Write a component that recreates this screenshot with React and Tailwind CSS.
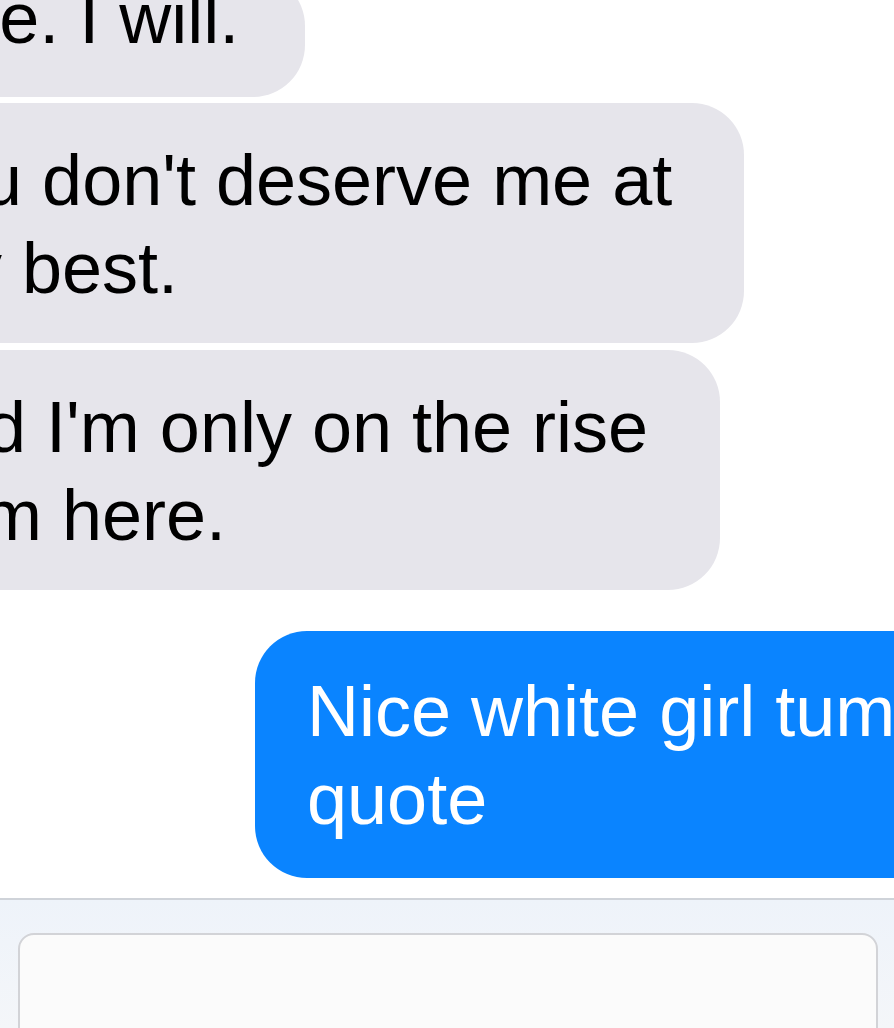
import React from "react";

const Received = ({ lines, shift, className = "" }) => (
  <div
    className={`self-start rounded-[52px] bg-[#e6e5eb] pl-[40px] text-black ${shift} ${className}`}
  >
    {lines.map((line, i) => (
      <div key={i} className="whitespace-nowrap">
        {line}
      </div>
    ))}
  </div>
);

const Sent = ({ lines }) => (
  <div className="ml-[255px] mt-[41px] w-[700px] shrink-0 rounded-[52px] bg-[#0a84ff] pb-[35px] pl-[52px] pt-[36px] text-white">
    {lines.map((line, i) => (
      <div key={i} className="whitespace-nowrap">
        {line}
      </div>
    ))}
  </div>
);

export default function App() {
  return (
    <div className="flex h-[1028px] w-[894px] flex-col overflow-hidden bg-white font-['Liberation_Sans',Arial,sans-serif] text-[72px] leading-[88px]">
      <div className="flex flex-1 flex-col">
        <Received
          lines={["Trust me. I will."]}
          shift="-ml-[282px] -mt-[26px] pb-[35px] pr-[66px]"
        />
        <Received
          lines={["you don't deserve me at", "my best."]}
          shift="-ml-[134px] mt-[6px] pt-[33px] pb-[31px] pr-[72px]"
        />
        <Received
          lines={["And I'm only on the rise", "from here."]}
          shift="-ml-[142px] mt-[7px] pt-[33px] pb-[31px] pr-[72px]"
        />
        <Sent lines={["Nice white girl tumblr", "quote"]} />
      </div>

      {/* compose bar */}
      <div className="h-[130px] shrink-0 border-t-2 border-[#cfd3d9] bg-gradient-to-b from-[#eef3fa] to-[#f4f6f9] pl-[18px] pr-[16px] pt-[33px]">
        <div className="h-[120px] rounded-[16px] border-2 border-[#d2d3d7] bg-[#fbfbfb]" />
      </div>
    </div>
  );
}
